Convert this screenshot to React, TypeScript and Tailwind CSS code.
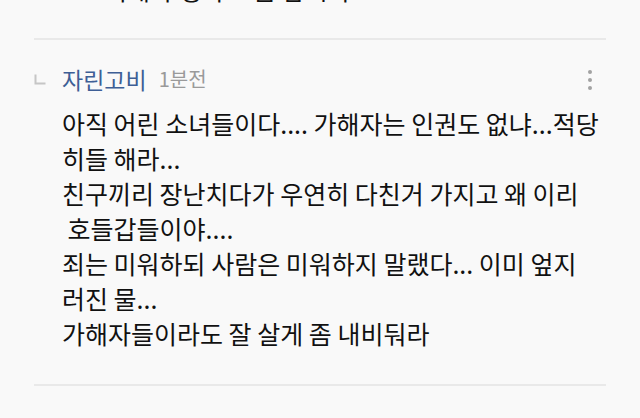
const FONT = "font-['Noto_Sans_CJK_KR','Noto_Sans',sans-serif]";

type Comment = {
  name: string;
  ago: string;
  lines: string[];
};

const comment: Comment = {
  name: "자린고비",
  ago: "1분전",
  lines: [
    "아직 어린 소녀들이다.... 가해자는 인권도 없냐...적당",
    "히들 해라...",
    "친구끼리 장난치다가 우연히 다친거 가지고 왜 이리",
    " 호들갑들이야....",
    "죄는 미워하되 사람은 미워하지 말랬다... 이미 엎지",
    "러진 물...",
    "가해자들이라도 잘 살게 좀 내비둬라",
  ],
};

function ReplyMark() {
  return (
    <svg width="12" height="11" viewBox="0 0 12 11" className="shrink-0">
      <path d="M1.5 0.5V9.5H11.5" fill="none" stroke="#c6c6c6" strokeWidth="2" />
    </svg>
  );
}

function MoreDots() {
  return (
    <div className="flex flex-col items-center gap-[4px] pt-[1px]">
      <span className="w-[4px] h-[4px] rounded-full bg-[#a2a2a2]" />
      <span className="w-[4px] h-[4px] rounded-full bg-[#a2a2a2]" />
      <span className="w-[4px] h-[4px] rounded-full bg-[#a2a2a2]" />
    </div>
  );
}

function CommentHeader({ name, ago, nameColor }: { name: string; ago: string; nameColor: string }) {
  return (
    <div className="flex items-center h-[24px] pl-[34px] pr-[48px]">
      <ReplyMark />
      <span className={`ml-[16px] text-[23px] leading-none ${nameColor}`}>{name}</span>
      <span className="ml-[12px] text-[20px] leading-none text-[#9a9a9a]">{ago}</span>
      <div className="ml-auto">
        <MoreDots />
      </div>
    </div>
  );
}

export default function App() {
  return (
    <div className={`w-[640px] h-[418px] overflow-hidden bg-[#f9f9f9] ${FONT}`}>
      {/* tail of the previous comment */}
      <p className="mt-[-28px] pl-[104px] text-[25px] leading-[35px] text-[#111]">
        피해자 생각도 좀 합시다.
      </p>

      <div className="mt-[31px] mx-[34px] h-[2px] bg-[#e9e9e9]" />

      <div className="mt-[27px]">
        <CommentHeader name={comment.name} ago={comment.ago} nameColor="text-[#3e5f96]" />
        <div className="mt-[15px] pl-[62px] text-[25px] leading-[35px] text-[#111]">
          {comment.lines.map((line, i) => (
            <p key={i} className="whitespace-pre">
              {line}
            </p>
          ))}
        </div>
      </div>

      <div className="mt-[33px] mx-[34px] h-[2px] bg-[#e9e9e9]" />

      <div className="mt-[30px]">
        <CommentHeader name="참새방앗간" ago="3분전" nameColor="text-[#eaa0b2]" />
      </div>
    </div>
  );
}
